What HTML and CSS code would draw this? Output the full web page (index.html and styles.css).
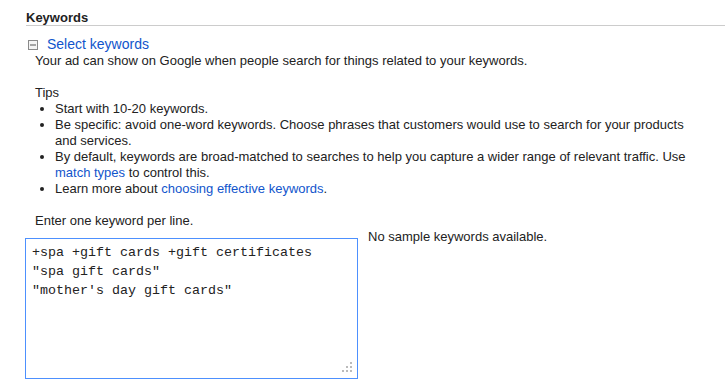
FILE: index.html
```html
<!DOCTYPE html>
<html>
<head>
<meta charset="utf-8">
<link rel="stylesheet" href="styles.css">
</head>
<body>
<div class="section">
  <h2 class="section-title">Keywords</h2>
  <div class="toggle-row">
    <svg class="toggle-icon" width="10" height="10" viewBox="0 0 10 10"><rect x="0.5" y="0.5" width="9" height="9" fill="#f4f4f4" stroke="#8a8a8a"/><rect x="2" y="4.5" width="6" height="1" fill="#555"/></svg>
    <a class="toggle-link" href="#">Select keywords</a>
  </div>
  <div class="content">
    <p class="intro">Your ad can show on Google when people search for things related to your keywords.</p>
    <p class="tips-title">Tips</p>
    <ul class="tips">
      <li>Start with 10-20 keywords.</li>
      <li>Be specific: avoid one-word keywords. Choose phrases that customers would use to search for your products and services.</li>
      <li>By default, keywords are broad-matched to searches to help you capture a wider range of relevant traffic. Use <a href="#">match types</a> to control this.</li>
      <li>Learn more about <a href="#">choosing effective keywords</a>.</li>
    </ul>
    <p class="label">Enter one keyword per line.</p>
    <div class="editor-row">
      <div class="editor">
        <textarea class="keywords" spellcheck="false">+spa +gift cards +gift certificates
"spa gift cards"
"mother's day gift cards"</textarea>
        <svg class="grip" width="11" height="11" viewBox="0 0 11 11"><g fill="#bbb"><rect x="8" y="0" width="2" height="2"/><rect x="4" y="4" width="2" height="2"/><rect x="8" y="4" width="2" height="2"/><rect x="0" y="8" width="2" height="2"/><rect x="4" y="8" width="2" height="2"/><rect x="8" y="8" width="2" height="2"/></g></svg>
      </div>
      <p class="samples">No sample keywords available.</p>
    </div>
  </div>
</div>
</body>
</html>
```

FILE: styles.css
```css
html, body {
  margin: 0;
  padding: 0;
  background: #fff;
}

body {
  font-family: "Liberation Sans", Arial, sans-serif;
  font-size: 13px;
  line-height: 16px;
  color: #222;
  padding-top: 10px;
}

a {
  color: #15c;
  text-decoration: none;
}

.section {
  padding-left: 26px;
}

.section-title {
  margin: 0;
  font-size: 13px;
  font-weight: bold;
  line-height: 15px;
  color: #222;
  border-bottom: 1px solid #ccc;
}

.toggle-row {
  display: flex;
  align-items: center;
  margin-top: 9px;
  padding-left: 2px;
  height: 18px;
}

.toggle-icon {
  display: block;
  margin-right: 9px;
  margin-top: 1px;
}

.toggle-link {
  font-size: 14px;
  line-height: 18px;
}

.content {
  padding-left: 9px;
  padding-right: 32px;
}

.content p {
  margin: 0;
}

.intro {
  margin-bottom: 16px !important;
}

.tips {
  margin: 0 0 16px 0;
  padding-left: 20px;
}

.editor-row {
  display: flex;
  align-items: flex-start;
  gap: 10px;
  margin-left: -10px;
}

.editor {
  position: relative;
  margin-top: 9px;
}

.keywords {
  display: block;
  box-sizing: border-box;
  width: 333px;
  height: 141px;
  margin: 0;
  padding: 4px 6px;
  border: 1px solid #4d90fe;
  outline: none;
  resize: none;
  font-family: "Liberation Mono", "Courier New", monospace;
  font-size: 13.33px;
  line-height: 19px;
  color: #222;
  background: #fff;
}

.grip {
  position: absolute;
  right: 5px;
  bottom: 6px;
}

.samples {
  margin: 0;
}
```
